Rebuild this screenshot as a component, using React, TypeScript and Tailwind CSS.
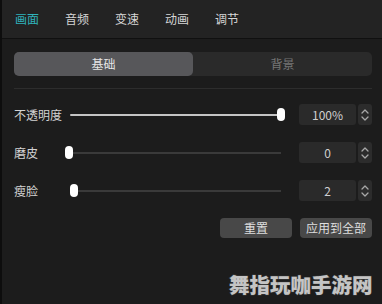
import React from "react"

const tabs = ["画面", "音频", "变速", "动画", "调节"]

const rows = [
  { label: "不透明度", value: "100%", pos: 1 },
  { label: "磨皮", value: "0", pos: 0 },
  { label: "瘦脸", value: "2", pos: 0.024 },
]

function Spinner() {
  return (
    <div className="ml-[2px] flex h-[21px] w-[14px] flex-col items-center justify-center gap-[2px] rounded-[3px] bg-[#2c2c2c]">
      <svg width="8" height="5" viewBox="0 0 8 5" fill="none">
        <path d="M1 4 L4 1 L7 4" stroke="#a8a8a8" strokeWidth="1.3" strokeLinecap="round" strokeLinejoin="round" />
      </svg>
      <svg width="8" height="5" viewBox="0 0 8 5" fill="none">
        <path d="M1 1 L4 4 L7 1" stroke="#a8a8a8" strokeWidth="1.3" strokeLinecap="round" strokeLinejoin="round" />
      </svg>
    </div>
  )
}

function Slider({ pos }: { pos: number }) {
  const travel = 212
  const left = pos * travel
  return (
    <div className="relative h-[21px] w-[220px]">
      {pos > 0.5 ? (
        <div className="absolute left-[5px] top-[10px] h-[2px] rounded-full bg-[#c4c4c4]" style={{ width: left - 4 }} />
      ) : (
        <div className="absolute right-[4px] top-[10px] h-[2px] bg-[#3a3a3a]" style={{ left: left + 6 }} />
      )}
      <div className="absolute top-[4px] h-[13px] w-[8px] rounded-[4px] bg-white" style={{ left }} />
    </div>
  )
}

export default function App() {
  return (
    <div className="relative flex h-[304px] w-[382px] overflow-hidden bg-[#1c1c1c] text-[12px] [font-family:'Noto_Sans_CJK_SC',sans-serif]">
      <div className="w-[3px] bg-[#0d0d0d]" />
      <div className="flex flex-1 flex-col">
        <header className="flex h-[39px] items-center gap-[26px] border-b border-[#101010] bg-[#232323] pl-[13px]">
          {tabs.map((t, i) => (
            <span key={t} className={i === 0 ? "text-[#2fb3bb]" : "text-[#d6d6d6]"}>
              {t}
            </span>
          ))}
        </header>

        <div className="flex flex-col pl-[12px] pr-[10px]">
          <div className="mt-[13px] flex h-[24px] rounded-[5px] bg-[#2a2a2a]">
            <div className="flex flex-1 items-center justify-center rounded-[5px] bg-[#57575a] text-[#e6e6e6]">基础</div>
            <div className="flex flex-1 items-center justify-center text-[#767676]">背景</div>
          </div>

          <div className="mt-[12px] h-px bg-[#2d2d2d]" />

          <div className="mt-[15px] flex flex-col gap-[17px]">
            {rows.map((r) => (
              <div key={r.label} className="flex items-center">
                <span className="w-[51px] text-[#d2d2d2]">{r.label}</span>
                <Slider pos={r.pos} />
                <div className="ml-[14px] flex h-[21px] w-[57px] items-center justify-center rounded-[3px] bg-[#2a2a2a] text-[#cfcfcf]">
                  {r.value}
                </div>
                <Spinner />
              </div>
            ))}
          </div>

          <div className="mt-[17px] flex justify-end gap-[8px]">
            <button className="h-[20px] w-[72px] rounded-[4px] bg-[#484848] text-[#dedede]">重置</button>
            <button className="h-[20px] w-[72px] rounded-[4px] bg-[#484848] text-[#dedede]">应用到全部</button>
          </div>
        </div>
      </div>

      <div className="absolute left-[229px] top-[274px] text-[20.5px] font-black leading-none tracking-[0px] text-[#c4c4c4] [-webkit-text-stroke:1px_#3a3a3a] [paint-order:stroke_fill]">
        舞指玩咖手游网
      </div>
    </div>
  )
}
